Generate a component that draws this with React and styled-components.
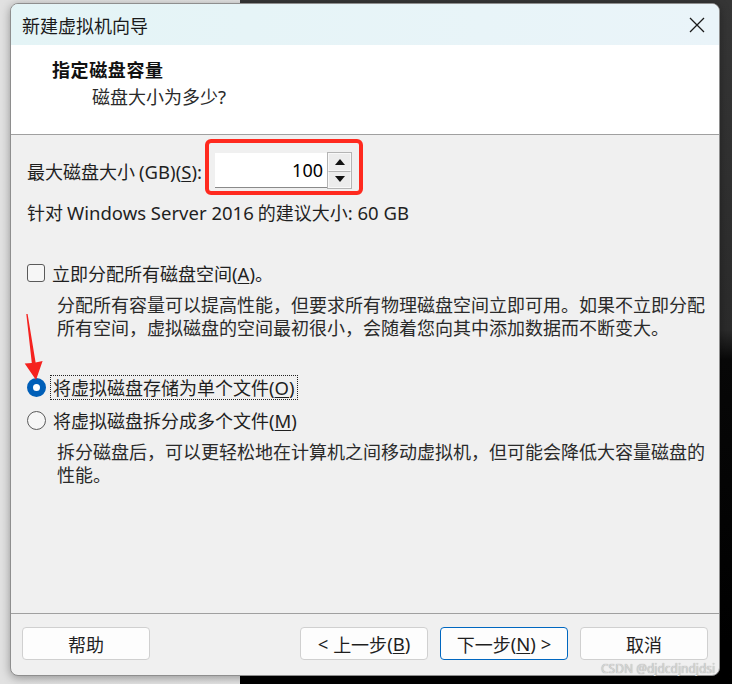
import React from 'react';
import styled, { createGlobalStyle } from 'styled-components';

const Global = createGlobalStyle`
  html, body { margin: 0; padding: 0; }
  body {
    width: 732px;
    height: 684px;
    overflow: hidden;
    font-family: "Noto Sans CJK SC", "Noto Sans", sans-serif;
    color: #1c1c1c;
    background:
      linear-gradient(to right, #e1e1e1 0, #e4e4e4 240px, transparent 240px),
      linear-gradient(to bottom, #363636 0, #2b2b2b 330px, #080808 360px, #000 100%);
  }
`;

const Page = styled.div`
  position: relative;
  width: 732px;
  height: 684px;
  box-sizing: border-box;
  padding: 3px 12px 8px 10px;
`;

const Window = styled.div`
  width: 710px;
  height: 673px;
  box-sizing: border-box;
  border: 1px solid #8e8e8e;
  border-radius: 8px;
  overflow: hidden;
  display: flex;
  flex-direction: column;
  background: #f0f0f0;
  box-shadow: 0 2px 10px rgba(0, 0, 0, 0.35);
`;

const TitleBar = styled.div`
  height: 41px;
  flex: none;
  display: flex;
  align-items: center;
  justify-content: space-between;
  padding: 0 14px 0 11px;
  background: linear-gradient(to right, #e4f4f6, #eaf4f9);
  font-size: 18px;
  color: #1a1a1a;
`;

const Header = styled.div`
  height: 90px;
  flex: none;
  box-sizing: border-box;
  background: #fff;
  border-bottom: 1px solid #a0a0a0;
  padding: 12px 0 0 41px;
  display: flex;
  flex-direction: column;
  gap: 3px;
`;

const HeaderTitle = styled.div`
  font-size: 18px;
  font-weight: 700;
  line-height: 24px;
  letter-spacing: 0.6px;
  color: #111;
`;

const HeaderSub = styled.div`
  font-size: 18px;
  line-height: 24px;
  padding-left: 40px;
  color: #2a2a2a;
`;

const Body = styled.div`
  flex: 1;
  padding: 17px 16px 0 16px;
  font-size: 18px;
  color: #1f1f1f;
`;

const Latin = styled.span`
  font-family: "Noto Sans", sans-serif;
  font-size: 18.5px;
`;

const Key = styled.span`
  text-decoration: underline;
  text-underline-offset: 2px;
`;

const SizeRow = styled.div`
  display: grid;
  grid-template-columns: 188px auto;
  align-items: center;
  height: 37px;
  white-space: nowrap;
`;

const Spinner = styled.div`
  position: relative;
  display: flex;
  align-items: stretch;
  width: 137px;
  height: 37px;
`;

const RedBox = styled.div`
  position: absolute;
  left: -10px;
  right: -11px;
  top: -13px;
  bottom: -6px;
  border: 4px solid #ff2a1f;
  border-radius: 6px;
  pointer-events: none;
`;

const SpinInput = styled.div`
  width: 112px;
  margin: 1px 0;
  box-sizing: border-box;
  background: #fff;
  border-bottom: 1px solid #8a8a8a;
  display: flex;
  align-items: center;
  justify-content: flex-end;
  padding-right: 4px;
  font-family: "Noto Sans", sans-serif;
  font-size: 18px;
  color: #000;
`;

const SpinButtons = styled.div`
  width: 25px;
  display: flex;
  flex-direction: column;
  border: 1px solid #b4b4b4;
  box-sizing: border-box;
`;

const SpinBtn = styled.div`
  flex: 1;
  display: flex;
  align-items: center;
  justify-content: center;
  background: #ececec;
  border: 1px solid #f8f8f8;
  & + & { border-top: 1px solid #b4b4b4; }
`;

const Recommend = styled.div`
  margin-top: 11px;
  line-height: 24px;
  white-space: nowrap;
`;

const OptionRow = styled.div`
  display: flex;
  align-items: center;
  gap: ${p => p.$gap || 7}px;
  height: 24px;
  margin-top: ${p => p.$mt}px;
  white-space: nowrap;
`;

const CheckBox = styled.span`
  width: 18px;
  height: 18px;
  box-sizing: border-box;
  border: 1px solid #5a5a5a;
  border-radius: 3px;
  background: #f6f6f6;
  flex: none;
`;

const Radio = styled.span`
  width: 19px;
  height: 19px;
  box-sizing: border-box;
  border-radius: 50%;
  flex: none;
  border: ${p => (p.$on ? '6px solid #005fb8' : '1px solid #5a5a5a')};
  background: ${p => (p.$on ? '#fff' : '#f6f6f6')};
`;

const FocusLabel = styled.span`
  outline: 1px dotted #222;
  padding: 0 2px;
  line-height: 23px;
`;

const Desc = styled.div`
  margin-top: 8px;
  margin-left: 30px;
  line-height: 23px;
  white-space: nowrap;
  color: #2a2a2a;
`;

const Footer = styled.div`
  flex: none;
  height: 62px;
  box-sizing: border-box;
  border-top: 1px solid #a0a0a0;
  display: flex;
  justify-content: space-between;
  align-items: flex-start;
  padding: 13px 11px 0 11px;
`;

const BtnGroup = styled.div`
  display: flex;
  gap: 12px;
`;

const Button = styled.div`
  width: 128px;
  height: 33px;
  box-sizing: border-box;
  border: 1px solid ${p => (p.$primary ? '#0067c0' : '#d0d0d0')};
  border-radius: 4px;
  background: #fdfdfd;
  display: flex;
  align-items: center;
  justify-content: center;
  font-size: 18px;
  color: #1f1f1f;
  white-space: pre;
`;

const Arrow = styled.svg`
  position: absolute;
  left: 20px;
  top: 310px;
  width: 30px;
  height: 74px;
`;

const Watermark = styled.div`
  position: absolute;
  left: 601px;
  top: 660px;
  font-family: "Noto Sans", sans-serif;
  font-size: 12px;
  color: #d8d8d8;
  text-shadow: 0 0 1px rgba(0, 0, 0, 0.4);
`;

const Triangle = ({ up }) => (
  <svg width="10" height="6" viewBox="0 0 10 6">
    <path d={up ? 'M5 0 L10 6 L0 6 Z' : 'M0 0 L10 0 L5 6 Z'} fill="#111" />
  </svg>
);

export default function App() {
  return (
    <>
      <Global />
      <Page>
        <Window>
          <TitleBar>
            <span>新建虚拟机向导</span>
            <svg width="16" height="16" viewBox="0 0 16 16">
              <path d="M1 1 L15 15 M15 1 L1 15" stroke="#1a1a1a" strokeWidth="1.3" />
            </svg>
          </TitleBar>
          <Header>
            <HeaderTitle>指定磁盘容量</HeaderTitle>
            <HeaderSub>磁盘大小为多少<Latin>?</Latin></HeaderSub>
          </Header>
          <Body>
            <SizeRow>
              <span>最大磁盘大小 <Latin>(GB)(<Key>S</Key>):</Latin></span>
              <Spinner>
                <SpinInput>100</SpinInput>
                <SpinButtons>
                  <SpinBtn><Triangle up /></SpinBtn>
                  <SpinBtn><Triangle /></SpinBtn>
                </SpinButtons>
                <RedBox />
              </Spinner>
            </SizeRow>
            <Recommend>
              针对 <Latin>Windows Server 2016</Latin> 的建议大小<Latin>: 60 GB</Latin>
            </Recommend>
            <OptionRow $mt={36}>
              <CheckBox />
              <span>立即分配所有磁盘空间<Latin>(<Key>A</Key>)</Latin>。</span>
            </OptionRow>
            <Desc>
              分配所有容量可以提高性能，但要求所有物理磁盘空间立即可用。如果不立即分配<br />
              所有空间，虚拟磁盘的空间最初很小，会随着您向其中添加数据而不断变大。
            </Desc>
            <OptionRow $mt={36} $gap={5}>
              <Radio $on />
              <FocusLabel>将虚拟磁盘存储为单个文件<Latin>(<Key>O</Key>)</Latin></FocusLabel>
            </OptionRow>
            <OptionRow $mt={9}>
              <Radio />
              <span>将虚拟磁盘拆分成多个文件<Latin>(<Key>M</Key>)</Latin></span>
            </OptionRow>
            <Desc>
              拆分磁盘后，可以更轻松地在计算机之间移动虚拟机，但可能会降低大容量磁盘的<br />
              性能。
            </Desc>
          </Body>
          <Footer>
            <Button>帮助</Button>
            <BtnGroup>
              <Button><Latin>&lt; </Latin>上一步<Latin>(<Key>B</Key>)</Latin></Button>
              <Button $primary>下一步<Latin>(<Key>N</Key>) &gt;</Latin></Button>
              <Button>取消</Button>
            </BtnGroup>
          </Footer>
        </Window>
        <Arrow viewBox="0 0 30 74">
          <polygon
            points="6.3,4 7.6,4 15.6,52.6 22.6,51 16,70 4.7,53.4 11.8,53"
            fill="#f5221f"
          />
        </Arrow>
        <Watermark>CSDN @djdcdjndjdsi</Watermark>
      </Page>
    </>
  );
}
